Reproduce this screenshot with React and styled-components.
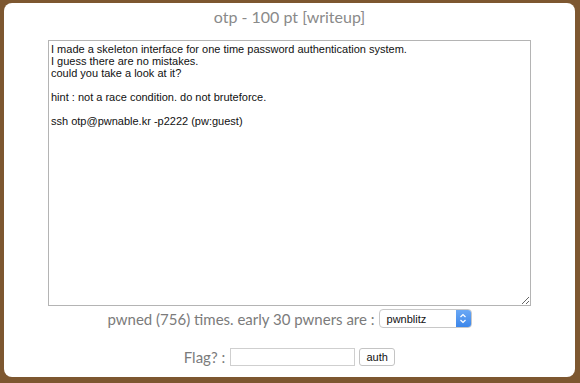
import React from 'react';
import styled, { createGlobalStyle } from 'styled-components';

const Global = createGlobalStyle`
  html, body { margin: 0; padding: 0; height: 100%; }
  body { background: #7d5730; font-family: Lato, "Open Sans", sans-serif; }
  #root { height: 100%; }
`;

const Page = styled.div`
  height: 100%;
  box-sizing: border-box;
  padding: 3px 5px 6px 4px;
  display: flex;
`;

const Panel = styled.div`
  flex: 1;
  background: #fff;
  border-radius: 8px;
  display: flex;
  flex-direction: column;
  align-items: center;
`;

const Title = styled.h1`
  margin: 3px 0 0;
  font-family: Lato, sans-serif;
  font-weight: 400;
  font-size: 16px;
  line-height: 21px;
  color: #8a8a8a;
`;

const Desc = styled.textarea`
  margin-top: 13px;
  width: 483px;
  height: 266px;
  box-sizing: border-box;
  border: 1px solid #b4b4b4;
  padding: 2px 2px;
  font-family: "Liberation Sans", Arial, sans-serif;
  font-size: 11px;
  line-height: 12px;
  color: #111;
  resize: both;
  outline: none;
`;

const Row = styled.div`
  display: flex;
  align-items: center;
  gap: ${p => p.gap || 5}px;
  margin-top: ${p => p.top}px;
  font-family: Lato, sans-serif;
  font-size: 15px;
  color: #7b7b7b;
`;

const Select = styled.div`
  width: 93px;
  height: 19px;
  box-sizing: border-box;
  border: 1px solid #c8c8c8;
  border-radius: 4px;
  display: flex;
  align-items: center;
  overflow: hidden;
  font-family: "Liberation Sans", Arial, sans-serif;
  font-size: 11px;
  color: #111;
  background: #fff;
`;

const SelectText = styled.span`
  flex: 1;
  padding-left: 7px;
`;

const Arrow = styled.span`
  width: 15px;
  height: 100%;
  background: linear-gradient(#6aa8f5, #3c86ea);
  display: flex;
  align-items: center;
  justify-content: center;
`;

const Input = styled.input`
  width: 125px;
  height: 18px;
  box-sizing: border-box;
  border: 1px solid #cfcfcf;
  padding: 0 3px;
  outline: none;
`;

const Button = styled.button`
  height: 18px;
  width: 36px;
  box-sizing: border-box;
  border: 1px solid #c4c4c4;
  border-radius: 3px;
  background: #fff;
  padding: 0;
  font-family: "Liberation Sans", Arial, sans-serif;
  font-size: 11px;
  color: #111;
  margin-left: -1px;
`;

const text = `I made a skeleton interface for one time password authentication system.
I guess there are no mistakes.
could you take a look at it?

hint : not a race condition. do not bruteforce.

ssh otp@pwnable.kr -p2222 (pw:guest)`;

export default function App() {
  return (
    <>
      <Global />
      <Page>
        <Panel>
          <Title>otp - 100 pt [writeup]</Title>
          <Desc readOnly defaultValue={text} />
          <Row top={3} gap={4}>
            <span>pwned (756) times. early 30 pwners are :</span>
            <Select>
              <SelectText>pwnblitz</SelectText>
              <Arrow>
                <svg width="8" height="11" viewBox="0 0 8 11">
                  <path d="M1.5 4 L4 1.5 L6.5 4 M1.5 7 L4 9.5 L6.5 7" stroke="#fff" strokeWidth="1.2" fill="none" />
                </svg>
              </Arrow>
            </Select>
          </Row>
          <Row top={20} gap={5}>
            <span>Flag? :</span>
            <Input />
            <Button>auth</Button>
          </Row>
        </Panel>
      </Page>
    </>
  );
}
